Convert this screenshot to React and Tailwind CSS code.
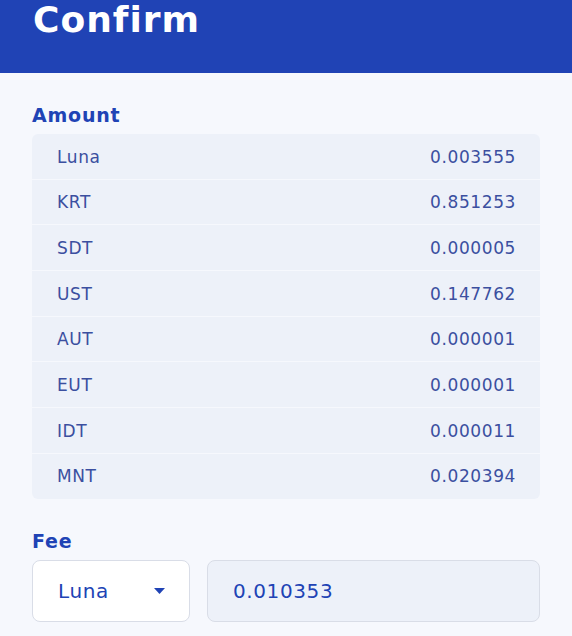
import React from 'react';

const amounts = [
  { denom: 'Luna', value: '0.003555' },
  { denom: 'KRT', value: '0.851253' },
  { denom: 'SDT', value: '0.000005' },
  { denom: 'UST', value: '0.147762' },
  { denom: 'AUT', value: '0.000001' },
  { denom: 'EUT', value: '0.000001' },
  { denom: 'IDT', value: '0.000011' },
  { denom: 'MNT', value: '0.020394' },
];

export default function App() {
  return (
    <div className="min-h-[636px] bg-[#f6f8fd] font-['DejaVu_Sans',sans-serif]">
      {/* header */}
      <div className="h-[73px] bg-[#2043b5] px-[33px]">
        <h1 className="text-[36px] font-bold leading-none text-white pt-[2px] tracking-[1px]">Confirm</h1>
      </div>

      <div className="px-[32px] pt-[31px]">
        <h2 className="text-[19px] font-bold leading-[22px] text-[#2043b5] tracking-[0.8px] mb-[8px]">Amount</h2>
        <div className="rounded-[6px] overflow-hidden flex flex-col gap-px">
          {amounts.map((a) => (
            <div
              key={a.denom}
              className="h-[44.7px] bg-[#edf1f9] flex items-center justify-between pt-[2px] pl-[25px] pr-[24px] text-[17px] tracking-[0.6px] text-[#3b4fa0]"
            >
              <span>{a.denom}</span>
              <span>{a.value}</span>
            </div>
          ))}
        </div>

        <h2 className="text-[19px] font-bold leading-[22px] text-[#2043b5] tracking-[0.8px] mt-[31px] mb-[8px]">Fee</h2>
        <div className="flex gap-[17px]">
          <div className="w-[158px] h-[62px] bg-white border border-[#d9dde7] rounded-[8px] flex items-center justify-between pl-[25px] pr-[24px] text-[20px] tracking-[0.6px] text-[#2043b5]">
            <span>Luna</span>
            <svg width="11" height="6" viewBox="0 0 11 6">
              <path d="M0 0 L11 0 L5.5 6 Z" fill="#2043b5" />
            </svg>
          </div>
          <div className="flex-1 h-[62px] bg-[#edf1f9] border border-[#d9dde7] rounded-[8px] flex items-center pl-[25px] text-[20px] tracking-[0.6px] text-[#2043b5]">
            0.010353
          </div>
        </div>
      </div>
    </div>
  );
}
